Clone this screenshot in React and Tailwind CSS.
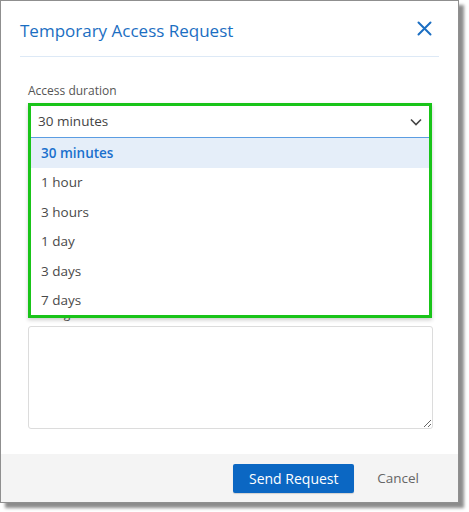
import React from "react";

const options = ["30 minutes", "1 hour", "3 hours", "1 day", "3 days", "7 days"];

export default function App() {
  return (
    <div className="w-[469px] h-[512px] bg-white" style={{ fontFamily: '"Open Sans", "Noto Sans", sans-serif' }}>
      <div className="w-[459px] h-[503px] border border-[#8f8f8f] bg-white shadow-[5px_5px_3px_rgba(0,0,0,0.45)] flex flex-col">
        {/* header */}
        <div className="mx-[19px] h-[56px] flex items-center justify-between border-b border-[#dde9f6]">
          <h1 className="text-[17px] leading-[24px] text-[#1b6ec2] mt-[4px]">Temporary Access Request</h1>
          <svg width="15" height="15" viewBox="0 0 15 15" className="mr-[7px]">
            <path d="M1.5 1.5 L13.5 13.5 M13.5 1.5 L1.5 13.5" stroke="#1b6ec2" strokeWidth="2" strokeLinecap="round" />
          </svg>
        </div>
        {/* body */}
        <div className="flex-1 px-[27px] pt-[26px]">
          <label className="block text-[12px] leading-[16px] text-[#555]">Access duration</label>
          <div className="relative mt-[4px] h-[35px] mr-[-1px]">
            <div className="absolute left-0 right-0 top-0 z-10 border-[3px] border-[#19c419] bg-white shadow-[0_2px_4px_rgba(0,0,0,0.2)]">
              <div className="h-[32px] flex items-center justify-between pl-[7px] pr-[6px] border-b border-[#5b9de2]">
                <span className="text-[13.5px] text-[#444]">30 minutes</span>
                <svg width="14" height="14" viewBox="0 0 14 14">
                  <path d="M2 4.5 L7 9.5 L12 4.5" fill="none" stroke="#444" strokeWidth="1.6" />
                </svg>
              </div>
              <ul className="h-[177px] overflow-hidden">
                {options.map((o, i) => (
                  <li
                    key={o}
                    className={
                      i === 0
                        ? "h-[29.5px] flex items-center pl-[10px] text-[13.5px] bg-[#e5eef9] text-[#1a70cd] font-semibold"
                        : "h-[29.5px] flex items-center pl-[10px] text-[13.5px] text-[#4a4a4a]"
                    }
                  >
                    {o}
                  </li>
                ))}
              </ul>
            </div>
          </div>
          <label className="block mt-[168px] text-[12px] leading-[16px] text-[#555]">Message</label>
          <textarea className="mt-[4px] block w-[405px] h-[103px] border border-[#dcdcdc] rounded-[3px] resize-y" />
        </div>
        {/* footer */}
        <div className="h-[48px] bg-[#f4f4f4] flex items-center justify-end gap-[23px] pr-[39px]">
          <button className="w-[121px] h-[29px] bg-[#0b67c3] rounded-[2px] text-white text-[14px] font-medium shadow-[0_1px_1px_rgba(0,0,0,0.15)]">
            Send Request
          </button>
          <span className="text-[13.5px] text-[#666]">Cancel</span>
        </div>
      </div>
    </div>
  );
}
